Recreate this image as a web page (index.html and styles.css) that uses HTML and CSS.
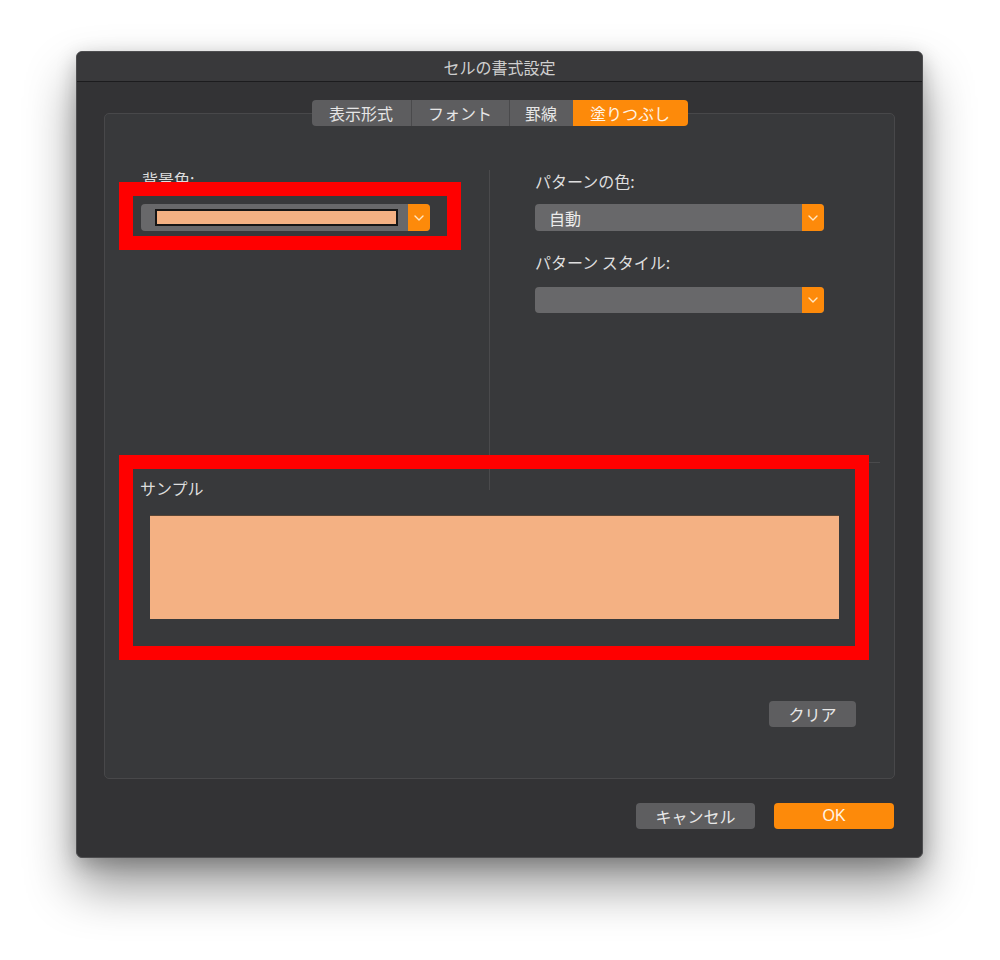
FILE: index.html
```html
<!DOCTYPE html>
<html lang="ja">
<head>
<meta charset="utf-8">
<title>セルの書式設定</title>
<link rel="stylesheet" href="styles.css">
</head>
<body>
<div class="window">
  <div class="titlebar">セルの書式設定</div>
  <div class="content">
    <div class="tabs">
      <div class="tab t1">表示形式</div>
      <div class="tab t2">フォント</div>
      <div class="tab t3">罫線</div>
      <div class="tab t4 active">塗りつぶし</div>
    </div>
    <div class="group">
      <div class="panes">
        <div class="pane left">
          <div class="label">背景色:</div>
          <div class="select color-select">
            <div class="select-value"><span class="swatch"></span></div>
            <div class="arrow"><svg width="10" height="6" viewBox="0 0 10 6"><path d="M1 1 L5 5 L9 1" fill="none" stroke="#ffe7c4" stroke-width="1.4" stroke-linecap="round" stroke-linejoin="round"/></svg></div>
          </div>
        </div>
        <div class="vdivider"></div>
        <div class="pane right">
          <div class="label">パターンの色:</div>
          <div class="select">
            <div class="select-value">自動</div>
            <div class="arrow"><svg width="10" height="6" viewBox="0 0 10 6"><path d="M1 1 L5 5 L9 1" fill="none" stroke="#ffe7c4" stroke-width="1.4" stroke-linecap="round" stroke-linejoin="round"/></svg></div>
          </div>
          <div class="label second">パターン スタイル:</div>
          <div class="select short">
            <div class="select-value"></div>
            <div class="arrow"><svg width="10" height="6" viewBox="0 0 10 6"><path d="M1 1 L5 5 L9 1" fill="none" stroke="#ffe7c4" stroke-width="1.4" stroke-linecap="round" stroke-linejoin="round"/></svg></div>
          </div>
        </div>
      </div>
      <div class="hrule"></div>
      <div class="sample">
        <div class="label">サンプル</div>
        <div class="sample-box"></div>
      </div>
      <div class="clear-row">
        <button class="btn">クリア</button>
      </div>
      <div class="mark mark-color"></div>
      <div class="mark mark-sample"></div>
    </div>
    <div class="footer">
      <button class="btn wide">キャンセル</button>
      <button class="btn wide primary">OK</button>
    </div>
  </div>
</div>
</body>
</html>
```

FILE: styles.css
```css
* { box-sizing: border-box; }

html, body {
  margin: 0;
  padding: 0;
  background: #ffffff;
}

body {
  min-height: 960px;
  padding-top: 51px;
  font-family: "Noto Sans CJK JP", "Noto Sans", sans-serif;
  font-size: 16px;
  color: #dedede;
}

.window {
  margin: 0 0 0 76px;
  width: 847px;
  height: 807px;
  background: #333335;
  border: 1px solid #4e4e50;
  border-radius: 6px;
  box-shadow: 0 28px 50px rgba(0, 0, 0, 0.42), 0 6px 20px rgba(0, 0, 0, 0.22);
}

.titlebar {
  height: 30px;
  line-height: 30px;
  text-align: center;
  color: #cfcfcf;
  font-size: 16px;
  background: #39393b;
  border-bottom: 1px solid #1c1c1e;
  border-radius: 5px 5px 0 0;
}

.content {
  padding: 18px 27px 0 27px;
}

.tabs {
  position: relative;
  z-index: 1;
  display: flex;
  justify-content: center;
  height: 26px;
}

.tab {
  height: 26px;
  line-height: 26px;
  text-align: center;
  background: #5d5d5f;
  color: #e6e6e6;
  border-left: 1px solid #4a4a4c;
}

.t1 { width: 99px; border-left: none; border-radius: 4px 0 0 4px; }
.t2 { width: 98px; }
.t3 { width: 64px; }
.t4 { width: 115px; }

.tab.active {
  background: #fd8a0a;
  color: #fff3e6;
  border-left: none;
  border-radius: 0 4px 4px 0;
}

.group {
  position: relative;
  margin-top: -13px;
  height: 666px;
  border: 1px solid #48484a;
  border-radius: 5px;
  background: #38393b;
}

.panes {
  display: flex;
  height: 348px;
}

.pane.left {
  width: 384px;
  padding: 55px 0 0 37px;
}

.vdivider {
  width: 1px;
  height: 320px;
  margin-top: 56px;
  background: #4a4a4c;
}

.pane.right {
  flex: 1;
  padding: 57px 0 0 45px;
}

.label {
  height: 20px;
  line-height: 20px;
  color: #dedede;
}

.label.second {
  margin-top: 21px;
}

.select {
  display: flex;
  width: 289px;
  height: 27px;
  margin-top: 13px;
  border-radius: 4px;
  overflow: hidden;
  background: #68686a;
}

.select.short {
  height: 26px;
  margin-top: 15px;
}

.color-select {
  margin-top: 15px;
  margin-left: -1px;
}

.select-value {
  flex: 1;
  display: flex;
  align-items: center;
  padding-left: 14px;
  color: #ececec;
  font-size: 16px;
}

.swatch {
  display: block;
  width: 243px;
  height: 17px;
  background: #f4b183;
  border: 2px solid #161616;
}

.arrow {
  width: 22px;
  display: flex;
  align-items: center;
  justify-content: center;
  background: #fd8a0a;
}

.hrule {
  height: 1px;
  margin: 0 14px 0 15px;
  background: #4a4a4c;
}

.sample {
  padding: 15px 0 0 35px;
}

.sample-box {
  width: 689px;
  height: 104px;
  margin: 17px 0 0 10px;
  background: #f4b183;
  border-top: 1px solid #5a4636;
}

.clear-row {
  display: flex;
  justify-content: flex-end;
  padding: 82px 38px 0 0;
}

.btn {
  height: 26px;
  padding: 0;
  border: none;
  border-radius: 4px;
  background: #5e5e60;
  color: #e8e8e8;
  font-family: "Noto Sans CJK JP", "Noto Sans", sans-serif;
  font-size: 16px;
  line-height: 26px;
  width: 87px;
}

.btn.wide {
  width: 119px;
}

.btn.primary {
  width: 120px;
  background: #fd8a0a;
  color: #fff4e6;
  font-family: "Liberation Sans", "Noto Sans", sans-serif;
}

.footer {
  display: flex;
  justify-content: flex-end;
  gap: 19px;
  padding: 24px 1px 0 0;
}

.mark {
  position: absolute;
  border: 14px solid #ff0000;
  z-index: 2;
}

.mark-color {
  left: 14px;
  top: 68px;
  width: 342px;
  height: 68px;
}

.mark-sample {
  left: 14px;
  top: 341px;
  width: 750px;
  height: 205px;
}
```
